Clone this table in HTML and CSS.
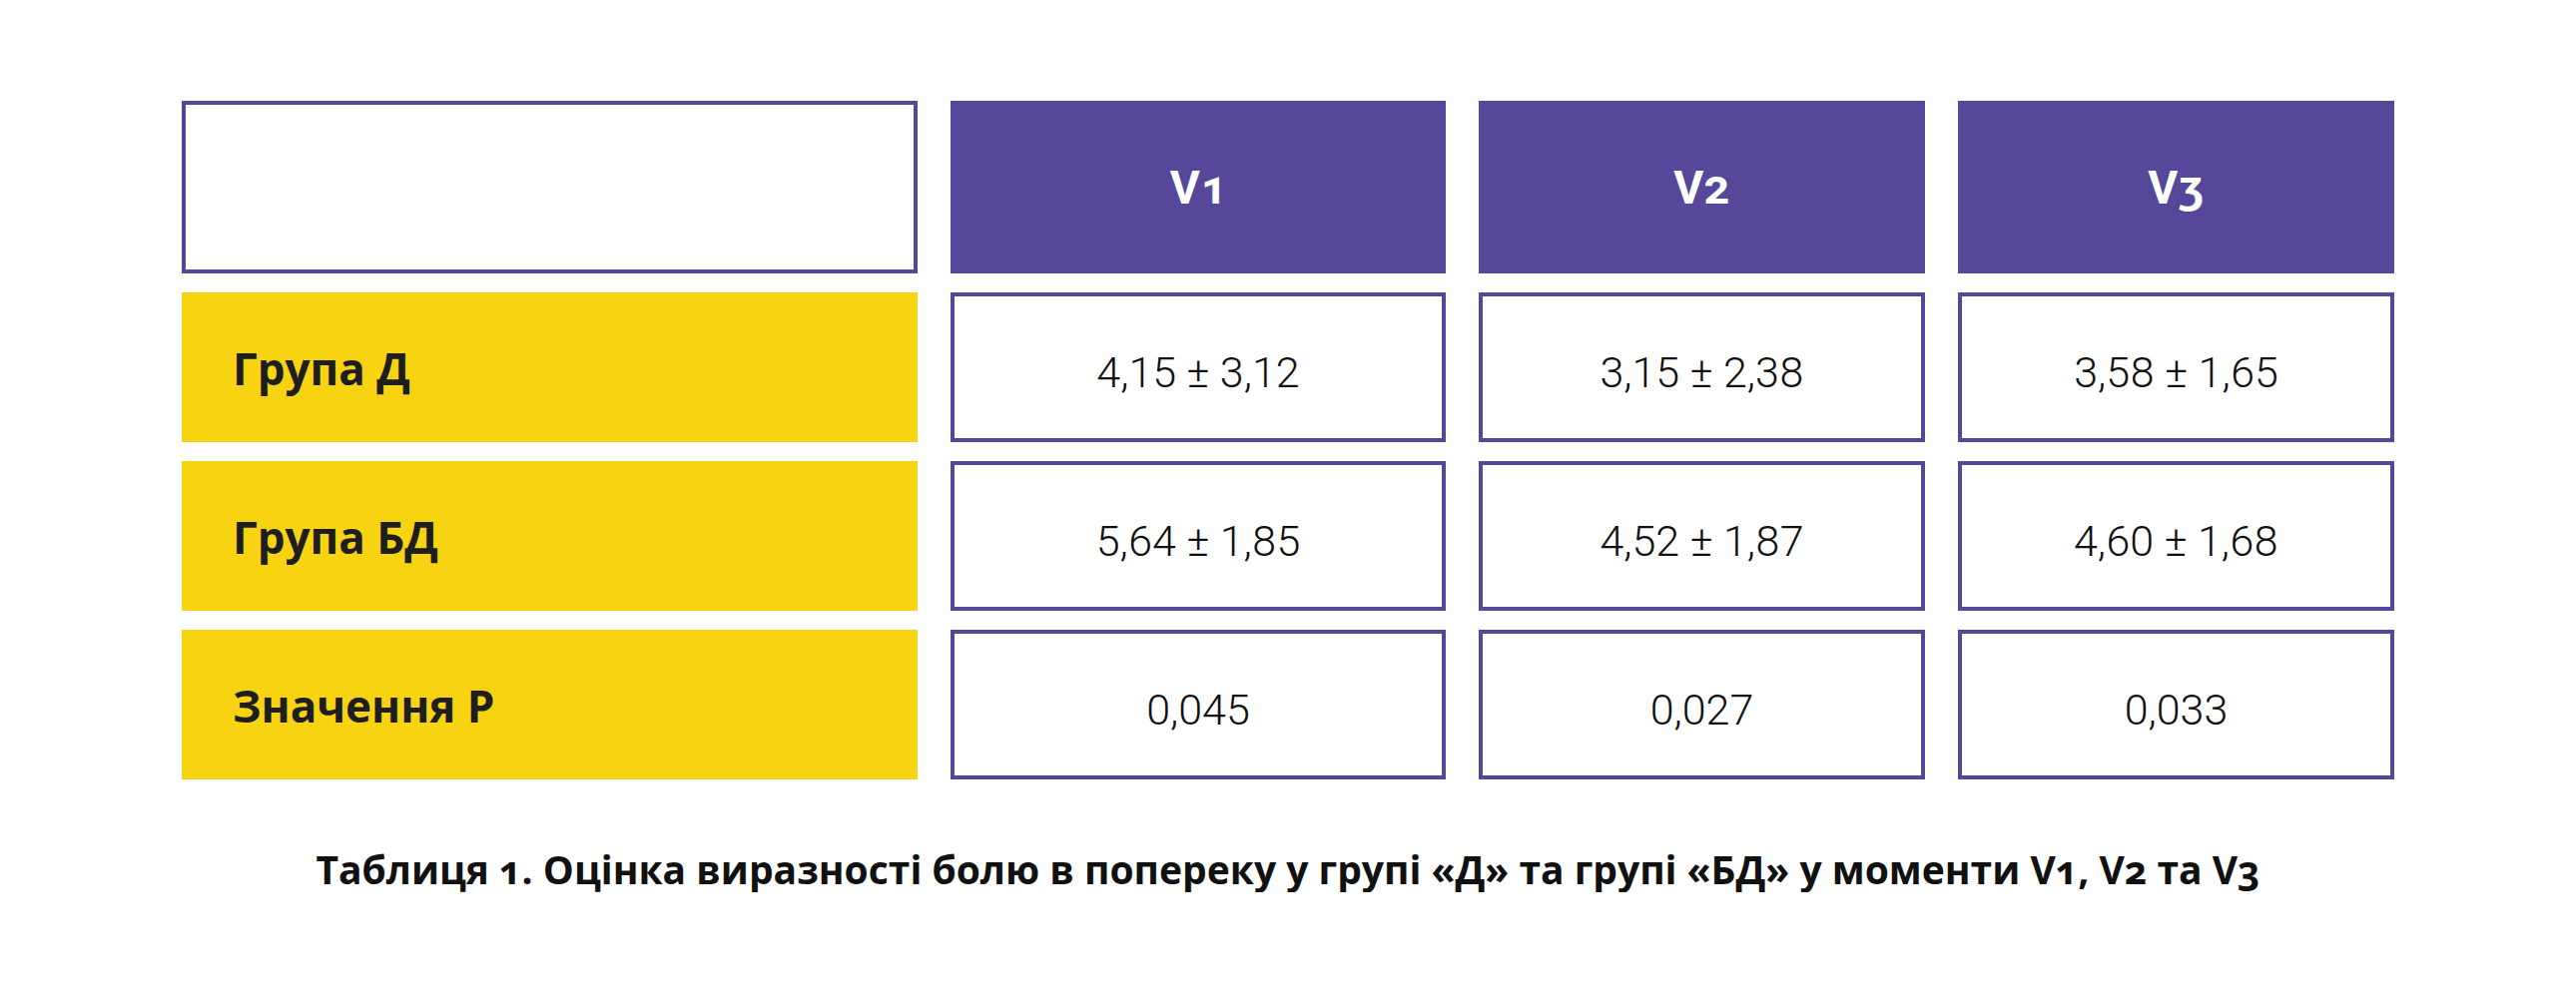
FILE: index.html
```html
<!DOCTYPE html>
<html lang="uk">
<head>
<meta charset="utf-8">
<title>Таблиця 1</title>
<link rel="stylesheet" href="styles.css">
</head>
<body>
<main class="page">
  <div class="table">
    <div class="cell corner"></div>
    <div class="cell head">V1</div>
    <div class="cell head">V2</div>
    <div class="cell head">V3</div>

    <div class="cell label">Група Д</div>
    <div class="cell value">4,15 ± 3,12</div>
    <div class="cell value">3,15 ± 2,38</div>
    <div class="cell value">3,58 ± 1,65</div>

    <div class="cell label">Група БД</div>
    <div class="cell value">5,64 ± 1,85</div>
    <div class="cell value">4,52 ± 1,87</div>
    <div class="cell value">4,60 ± 1,68</div>

    <div class="cell label">Значення Р</div>
    <div class="cell value">0,045</div>
    <div class="cell value">0,027</div>
    <div class="cell value">0,033</div>
  </div>
  <p class="caption">Таблиця 1. Оцінка виразності болю в попереку у групі «Д» та групі «БД» у моменти V1, V2 та V3</p>
</main>
</body>
</html>
```
FILE: styles.css
```css
* { box-sizing: border-box; }

html, body {
  margin: 0;
  padding: 0;
  background: #ffffff;
}

body {
  font-family: "Roboto", "Liberation Sans", sans-serif;
  color: #111111;
}

.page {
  width: 2580px;
  padding-top: 101px;
}

.table {
  width: 2216px;
  margin: 0 auto;
  display: grid;
  grid-template-columns: 737px 496px 447px 437px;
  grid-template-rows: 173px 150px 150px 150px;
  column-gap: 33px;
  row-gap: 19px;
}

.cell {
  display: flex;
  align-items: center;
}

.corner {
  background: #ffffff;
  border: 4px solid #56479a;
}

.head {
  background: #56479a;
  color: #ffffff;
  justify-content: center;
  font-family: "Roboto", "Liberation Sans", sans-serif;
  font-weight: 700;
  font-size: 46px;
  font-variant-numeric: oldstyle-nums;
}

.label {
  background: #f7d311;
  color: #1e1e1e;
  padding-left: 51px;
  padding-top: 2px;
  font-family: "Open Sans", "Liberation Sans", sans-serif;
  font-weight: 700;
  font-size: 44px;
}

.value {
  background: #ffffff;
  border: 4px solid #56479a;
  justify-content: center;
  padding-top: 10px;
  font-family: "Roboto", "Liberation Sans", sans-serif;
  font-weight: 300;
  font-size: 43px;
  font-variant-numeric: lining-nums;
  color: #111111;
}

.caption {
  margin: 66px 0 0;
  text-align: center;
  font-family: "Open Sans", "Liberation Sans", sans-serif;
  font-weight: 700;
  font-size: 39px;
  line-height: 47px;
  font-variant-numeric: oldstyle-nums;
  color: #111111;
  white-space: nowrap;
}
```
